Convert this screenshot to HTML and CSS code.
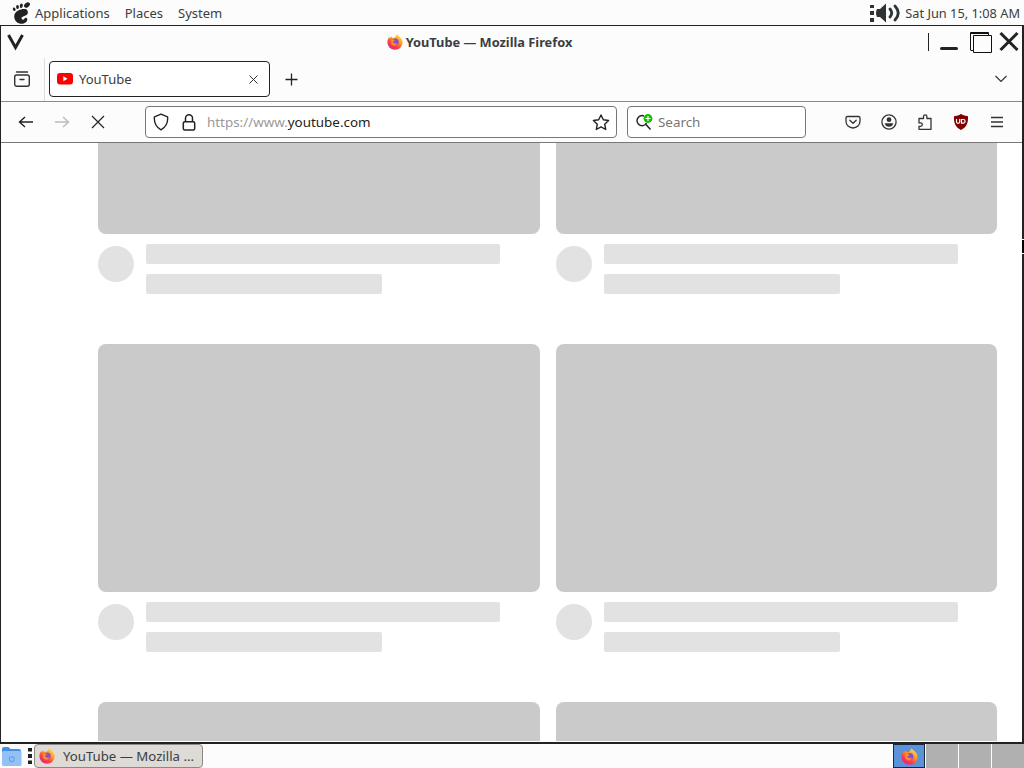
FILE: index.html
```
<!DOCTYPE html>
<html lang="en">
<head>
    <meta charset="UTF-8">
    <meta name="viewport" content="width=device-width, initial-scale=1.0">
    <title>YouTube — Mozilla Firefox</title>
    <link rel="stylesheet" href="styles.css">
</head>
<body>
    <!-- shared gradients and the firefox logo -->
    <svg class="defs" width="0" height="0">
        <defs>
            <linearGradient id="flame" x1="0.85" y1="0.05" x2="0.25" y2="0.95">
                <stop offset="0" stop-color="#ffe13a"/>
                <stop offset="0.4" stop-color="#ff9a22"/>
                <stop offset="0.7" stop-color="#fb4048"/>
                <stop offset="1" stop-color="#e8237c"/>
            </linearGradient>
            <symbol id="firefox" viewBox="0 0 16 16">
                <path fill="url(#flame)" d="M10 0.3c.7 1.3 2 1.8 3.1 3 1.5 1.5 2.5 3.3 2.5 5.2A7.6 7.3 0 0 1 8 15.8 7.5 7.4 0 0 1 .4 8.500C.4 6.100 1.100 4.500 2.300 3l.4 1.300C3.300 3.300 4 2.600 4.800 2.300l-.1 1.600c.9-.2 1.600 0 2.300.3C7.700 2.900 9.500 2.300 10 .3z"/>
                <circle cx="8.300" cy="8" r="3.400" fill="#8a4bd8"/>
                <path fill="#ff8b2a" d="M3.800 6.200c1.200-1 3-1 4.200-.2-.2 1-1.400 1.100-2 1.600.2 1.900 2.900 2.800 4.600 1.500-.5 2-2.500 3-4.400 2.400C4 10.800 3 8.300 3.800 6.200z"/>
            </symbol>
        </defs>
    </svg>

    <div class="top-panel">
        <svg class="foot" width="18" height="22" viewBox="0 0 18 22" fill="#222">
            <ellipse cx="15" cy="3" rx="3.300" ry="2.200" transform="rotate(-40 15 3)"/>
            <ellipse cx="9.300" cy="3.700" rx="1.500" ry="2.300" transform="rotate(12 9.300 3.700)"/>
            <ellipse cx="5.500" cy="5" rx="1.400" ry="2"/>
            <ellipse cx="2.200" cy="7.200" rx="1.300" ry="1.800" transform="rotate(-20 2.200 7.200)"/>
            <path d="M14.500 7.500C11.500 6 2.300 8.400 2.200 14.200c-.1 4.500 3.600 7.600 7.500 7.600 3.700 0 5.900-2.400 5.500-5-.3-1.700-2.400-1-3 .3-.8 1.300-2.600.4-2.700-.8-.1-2.500 5.700-1.700 6.300-5.300.2-1.400-.4-3-1.300-3.500z"/>
        </svg>
        <span class="menu-item">Applications</span>
        <span class="menu-item">Places</span>
        <span class="menu-item">System</span>
        <div class="tray">
            <svg width="31" height="20" viewBox="0 0 31 20">
                <path fill="#2e3436" d="M0 2h4v3H0zM0 8h4v4H0zM0 15h4v4H0zM7 6h3l6-5.500v19L10 14H7q-2-4 0-8z"/>
                <path fill="none" stroke="#2e3436" stroke-width="2.800" stroke-linecap="round" d="M20 6q3.500 4 0 8M25 3q6.500 7 0 14"/>
            </svg>
            <span>Sat Jun 15, 1:08 AM</span>
        </div>
    </div>

    <div class="window">
        <div class="titlebar">
            <svg width="18" height="18" viewBox="0 0 18 18">
                <path fill="none" stroke="#222" stroke-width="3" d="M1.500 2L8.500 14.500 15.500 2"/>
            </svg>
            <div class="window-title">
                <svg width="16" height="16"><use href="#firefox"/></svg>
                <span>YouTube — Mozilla Firefox</span>
            </div>
            <svg width="92" height="24" viewBox="0 0 92 24" fill="none">
                <path stroke="#222" d="M1.500 3v18"/>
                <path stroke="#222" stroke-width="3" stroke-linecap="round" d="M14.500 18.500h15"/>
                <path stroke="#111" d="M43.500 20V2.500H61.500V5M43.500 20.500h3M43 3.500h19"/>
                <path stroke="#111" d="M46.500 5.500h18v17h-18z"/>
                <path stroke="#222" stroke-width="3" d="M73.500 3l17 17M90.500 3l-17 17"/>
            </svg>
        </div>

        <div class="tabbar">
            <div class="view-button">
                <svg width="16" height="16" viewBox="0 0 16 16" fill="none" stroke="#333" stroke-width="1.400" stroke-linecap="round">
                    <path d="M2.500 1h11"/>
                    <rect x=".7" y="4" width="14.600" height="11.300" rx="2"/>
                    <path d="M6 8.500h4"/>
                </svg>
            </div>
            <div class="tab">
                <svg width="16" height="12" viewBox="0 0 16 12">
                    <rect width="16" height="11.500" rx="3" fill="#f00"/>
                    <path fill="#fff" d="M6.300 3.200l4.300 2.500-4.300 2.500z"/>
                </svg>
                <span class="tab-label">YouTube</span>
                <svg width="9" height="9" viewBox="0 0 9 9" stroke="#333"><path d="M.5 .5l8 8M8.500 .5l-8 8"/></svg>
            </div>
            <svg class="new-tab" width="13" height="13" viewBox="0 0 13 13" stroke="#222" stroke-width="1.300"><path d="M6.500 .5v12M.5 6.500h12"/></svg>
            <svg class="all-tabs" width="12" height="8" viewBox="0 0 12 8" fill="none" stroke="#333" stroke-width="1.200"><path d="M.5 1l5.500 5.500L11.500 1"/></svg>
        </div>

        <div class="navbar">
            <svg width="16" height="14" viewBox="0 0 16 14" fill="none" stroke="#222" stroke-width="1.400"><path d="M15 7H2M7 2L1.500 7 7 12"/></svg>
            <svg class="forward" width="16" height="14" viewBox="0 0 16 14" fill="none" stroke="#bbb" stroke-width="1.400"><path d="M1 7h13M9 2l5.500 5L9 12"/></svg>
            <svg class="stop" width="14" height="14" viewBox="0 0 14 14" stroke="#222" stroke-width="1.200"><path d="M1 1l12 12M13 1L1 13"/></svg>
            <div class="urlbar">
                <svg width="16" height="18" viewBox="0 0 16 18" fill="none" stroke="#222" stroke-width="1.400" stroke-linejoin="round"><path d="M8 1.200l6.600 2.600c.5 5.500-1.600 10.300-6.600 13C3 14.100.9 9.300 1.400 3.800z"/></svg>
                <svg class="lock" width="14" height="17" viewBox="0 0 14 17" fill="none" stroke="#222" stroke-width="1.500"><rect x="1.300" y="7.700" width="11.400" height="8.300" rx="1.500"/><path d="M3.500 7.500V4.300a3.500 3.500 0 0 1 7 0v3.200"/></svg>
                <span class="url">https://www.<b>youtube.com</b></span>
                <svg width="18" height="17" viewBox="0 0 18 17" fill="none" stroke="#222" stroke-width="1.400" stroke-linejoin="round"><path d="M9 1l2.300 4.800 5.300.7-3.900 3.700 1 5.300L9 12.900l-4.700 2.600 1-5.300-3.900-3.700 5.300-.7z"/></svg>
            </div>
            <div class="searchbar">
                <svg width="17" height="17" viewBox="0 0 17 17" fill="none">
                    <path stroke="#222" stroke-width="1.500" d="M10.500 9A5 5 0 1 1 8 2M9.500 10l5 5.500"/>
                    <circle cx="12" cy="4.500" r="4.400" fill="#12bc00"/>
                    <path stroke="#fff" stroke-width="1.200" d="M12 2v5M9.500 4.500h5"/>
                </svg>
                <span>Search</span>
            </div>
            <div class="toolbar-icons">
                <svg width="16" height="16" viewBox="0 0 16 16" fill="none" stroke="#333" stroke-width="1.300" stroke-linecap="round" stroke-linejoin="round"><path d="M2.500 2.500h11q1.500 0 1.500 1.500v3.300a7 6.700 0 0 1-14 0V4q0-1.500 1.500-1.500zM4.800 6.300L8 9.300l3.200-3"/></svg>
                <svg width="16" height="16" viewBox="0 0 16 16" fill="#333"><circle cx="8" cy="8" r="7.100" fill="none" stroke="#333" stroke-width="1.300"/><circle cx="8" cy="5.700" r="2.400"/><path d="M3.700 9.300h8.600Q11.500 12.800 8 12.800T3.700 9.300z"/></svg>
                <svg width="16" height="16" viewBox="0 0 16 16" fill="none" stroke="#333" stroke-width="1.300" stroke-linejoin="round"><path d="M2 4.500h4.500V2.600a1.700 1.700 0 0 1 3.400 0v1.900H14v10.800H2v-3h1.600a1.700 1.700 0 0 0 0-3.400H2z"/></svg>
                <svg width="16" height="16" viewBox="0 0 16 16"><path fill="#800000" d="M8 0q3 2 7 2.200c.3 6.500-1 10.500-7 13.800C2 12.700.7 8.700 1 2.200 5 2 8 0 8 0z"/><path fill="none" stroke="#fff" stroke-width="1.200" d="M3.500 5v2.800q0 1.500 1.600 1.500T6.700 7.800V5M8.500 5.500h1.800a1.800 1.800 0 0 1 0 3.600H8.500z"/></svg>
                <svg width="16" height="16" viewBox="0 0 16 16" stroke="#333" stroke-width="1.300"><path d="M2 3.500h12M2 8h12M2 12.500h12"/></svg>
            </div>
        </div>

        <div class="page">
            <div class="video-grid">
                <div class="video first">
                    <div class="thumb"></div>
                    <div class="details"><div class="avatar"></div><div class="lines"><div class="line"></div><div class="line short"></div></div></div>
                </div>
                <div class="video first">
                    <div class="thumb"></div>
                    <div class="details"><div class="avatar"></div><div class="lines"><div class="line"></div><div class="line short"></div></div></div>
                </div>
                <div class="video">
                    <div class="thumb"></div>
                    <div class="details"><div class="avatar"></div><div class="lines"><div class="line"></div><div class="line short"></div></div></div>
                </div>
                <div class="video">
                    <div class="thumb"></div>
                    <div class="details"><div class="avatar"></div><div class="lines"><div class="line"></div><div class="line short"></div></div></div>
                </div>
                <div class="video"><div class="thumb"></div></div>
                <div class="video"><div class="thumb"></div></div>
            </div>
        </div>
        <div class="edge-mark"></div>
    </div>

    <div class="bottom-panel">
        <svg width="20" height="20" viewBox="0 0 20 20">
            <path fill="#438de6" d="M0 3q0-2 2-2h4.500l2 2H17q2 0 2 2v6H0z"/>
            <rect y="5" width="19.500" height="15" rx="1.500" fill="#92c1f7"/>
            <path fill="none" stroke="#5c98e5" d="M7.500 11h4.500v2.500a2.200 2.200 0 0 1-4.500 0z"/>
        </svg>
        <svg class="handle" width="4" height="16" viewBox="0 0 4 16" fill="#222"><path d="M0 0h4v3.500H0zM0 6h4v4H0zM0 12.500h4V16H0z"/></svg>
        <div class="task">
            <svg width="16" height="16"><use href="#firefox"/></svg>
            <span>YouTube — Mozilla ...</span>
        </div>
        <div class="workspaces">
            <div class="workspace active"><svg width="17" height="17"><use href="#firefox"/></svg></div>
            <div class="workspace"></div>
            <div class="workspace"></div>
            <div class="workspace"></div>
        </div>
    </div>
</body>
</html>
```
FILE: styles.css
```
* {
    box-sizing: border-box;
}
body {
    margin: 0;
    width: 1024px;
    height: 768px;
    overflow: hidden;
    display: flex;
    flex-direction: column;
    font-family: "Noto Sans", sans-serif;
    font-size: 13px;
    color: #3a3e40;
    background-color: #fcfcfc;
}
svg {
    display: block;
    flex: none;
}
span {
    white-space: nowrap;
}
.defs {
    position: absolute;
}
.top-panel {
    height: 25px;
    display: flex;
    align-items: center;
    padding: 0 4px 0 12px;
}
.foot {
    margin-right: 5px;
}
.menu-item {
    margin-right: 15px;
}
.tray {
    margin-left: auto;
    display: flex;
    align-items: center;
    gap: 4px;
    font-size: 12.8px;
}
.window {
    position: relative;
    height: 719px;
    display: flex;
    flex-direction: column;
    border: 1px solid #222;
    border-right-width: 2px;
    border-bottom-width: 2px;
}
.titlebar {
    height: 32px;
    display: flex;
    align-items: center;
    justify-content: space-between;
    padding: 0 3px 0 6px;
}
.window-title {
    display: flex;
    align-items: center;
    gap: 3px;
    margin-left: 7px;
    font-size: 12.8px;
    font-weight: bold;
}
.tabbar {
    height: 44px;
    display: flex;
    align-items: center;
    padding: 0 15px 1px 0;
    border-bottom: 1px solid #8a8a86;
}
.view-button {
    width: 44px;
    height: 43px;
    display: flex;
    align-items: center;
    margin-right: 4px;
    padding-left: 13px;
    border-right: 1px solid #ddd;
}
.tab {
    width: 221px;
    height: 36px;
    display: flex;
    align-items: center;
    padding: 0 11px 0 7px;
    border: 1px solid #222;
    border-radius: 4px;
    background-color: #fff;
}
.tab-label {
    flex: 1;
    margin-left: 6px;
}
.new-tab {
    margin-left: 15px;
}
.all-tabs {
    margin-left: auto;
}
.navbar {
    height: 41px;
    display: flex;
    align-items: center;
    padding: 0 17px;
    border-bottom: 1px solid #777;
}
.forward {
    margin-left: 20px;
}
.stop {
    margin-left: 21px;
}
.urlbar,
.searchbar {
    height: 32px;
    display: flex;
    align-items: center;
    border: 1px solid #777;
    border-radius: 4px;
    background-color: #fff;
}
.urlbar {
    width: 472px;
    margin-left: 40px;
    padding: 0 6px 0 7px;
}
.lock {
    margin-left: 13px;
}
.url {
    flex: 1;
    margin-left: 11px;
    font-size: 13.4px;
    color: #999;
}
.url b {
    font-weight: normal;
    color: #222;
}
.searchbar {
    width: 179px;
    margin-left: 10px;
    padding-left: 8px;
    gap: 5px;
    font-size: 13.4px;
    color: #777;
}
.toolbar-icons {
    display: flex;
    gap: 20px;
    margin-left: auto;
}
.page {
    flex: 1;
    min-height: 0;
    margin-bottom: 1px;
    overflow: hidden;
    padding: 0 25px 0 97px;
    background-color: #fff;
}
.video-grid {
    display: grid;
    grid-template-columns: 1fr 1fr;
    column-gap: 16px;
    row-gap: 50px;
}
.thumb {
    height: 248px;
    border-radius: 8px;
    background-color: #cacaca;
}
.first .thumb {
    height: 91px;
    border-radius: 0 0 8px 8px;
}
.details {
    display: flex;
    gap: 12px;
    margin-top: 10px;
}
.avatar {
    width: 36px;
    height: 36px;
    margin-top: 2px;
    border-radius: 50%;
    background-color: #e2e2e2;
}
.lines {
    flex: 1;
}
.line {
    width: 354px;
    height: 20px;
    border-radius: 2px;
    background-color: #e2e2e2;
}
.short {
    width: 236px;
    margin-top: 10px;
}
.edge-mark {
    position: absolute;
    right: -2px;
    top: 213px;
    width: 2px;
    height: 15px;
    border-top: 1px solid #fff;
    border-bottom: 1px solid #fff;
    background-color: #000;
}
.bottom-panel {
    height: 24px;
    display: flex;
    align-items: center;
    padding-left: 2px;
}
.handle {
    margin-left: 6px;
}
.task {
    width: 169px;
    height: 24px;
    display: flex;
    align-items: center;
    gap: 8px;
    margin-left: 2px;
    padding-left: 4px;
    border: 1px solid #8b8985;
    border-radius: 4px;
    background-color: #dedad6;
    font-size: 13.2px;
}
.workspaces {
    display: flex;
    gap: 1px;
    margin-left: auto;
}
.workspace {
    width: 32px;
    height: 24px;
    background-color: #b0b0b0;
}
.active {
    display: flex;
    align-items: center;
    justify-content: center;
    border: 1px solid #14293f;
    background-color: #5c92d8;
}
```
